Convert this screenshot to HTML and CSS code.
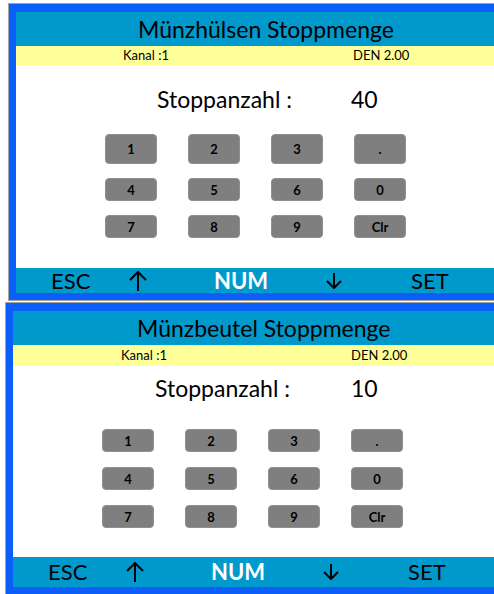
FILE: index.html
```html
<!DOCTYPE html>
<html lang="de">
<head>
  <meta charset="UTF-8">
  <title>Stoppmenge</title>
  <link rel="stylesheet" href="styles.css">
</head>
<body>
  <!-- Münzhülsen -->
  <div class="frame frame-a">
    <div class="screen screen-a">
      <div class="title">Münzhülsen Stoppmenge</div>
      <div class="info">
        <span>Kanal :1</span>
        <span>DEN 2.00</span>
      </div>
      <div class="body">
        <div class="value-row">
          <span>Stoppanzahl :</span>
          <span>40</span>
        </div>
        <div class="keypad">
          <div class="key">1</div>
          <div class="key">2</div>
          <div class="key">3</div>
          <div class="key">.</div>
          <div class="key">4</div>
          <div class="key">5</div>
          <div class="key">6</div>
          <div class="key">0</div>
          <div class="key">7</div>
          <div class="key">8</div>
          <div class="key">9</div>
          <div class="key">Clr</div>
        </div>
      </div>
      <div class="softkeys">
        <span>ESC</span>
        <span class="arrow">
          <svg width="20" height="20" viewBox="0 0 20 20"><path d="M10 1V20M2 9L10 1L18 9" fill="none" stroke="#000" stroke-width="2"/></svg>
        </span>
        <span class="num">NUM</span>
        <span class="arrow">
          <svg width="18" height="16" viewBox="0 0 18 16"><path d="M9 0V15M2 8L9 15L16 8" fill="none" stroke="#000" stroke-width="2"/></svg>
        </span>
        <span>SET</span>
      </div>
    </div>
  </div>

  <!-- Münzbeutel -->
  <div class="frame frame-b">
    <div class="screen screen-b">
      <div class="title">Münzbeutel Stoppmenge</div>
      <div class="info">
        <span>Kanal :1</span>
        <span>DEN 2.00</span>
      </div>
      <div class="body">
        <div class="value-row">
          <span>Stoppanzahl :</span>
          <span>10</span>
        </div>
        <div class="keypad">
          <div class="key">1</div>
          <div class="key">2</div>
          <div class="key">3</div>
          <div class="key">.</div>
          <div class="key">4</div>
          <div class="key">5</div>
          <div class="key">6</div>
          <div class="key">0</div>
          <div class="key">7</div>
          <div class="key">8</div>
          <div class="key">9</div>
          <div class="key">Clr</div>
        </div>
      </div>
      <div class="softkeys">
        <span>ESC</span>
        <span class="arrow">
          <svg width="20" height="20" viewBox="0 0 20 20"><path d="M10 1V20M2 9L10 1L18 9" fill="none" stroke="#000" stroke-width="2"/></svg>
        </span>
        <span class="num">NUM</span>
        <span class="arrow">
          <svg width="18" height="16" viewBox="0 0 18 16"><path d="M9 0V15M2 8L9 15L16 8" fill="none" stroke="#000" stroke-width="2"/></svg>
        </span>
        <span>SET</span>
      </div>
    </div>
  </div>
</body>
</html>
```

FILE: styles.css
```css
html, body {
  margin: 0;
  width: 494px;
  height: 594px;
  overflow: hidden;
  background: #fff;
}
body {
  font-family: Lato, "Open Sans", sans-serif;
  color: #000;
}

/* the screens run past the right edge of the shot, so no right border */
.frame {
  border: 1px solid #a4a4a4;
  border-right: 0;
}
.frame-a {
  margin: 3px 0 0 8px;
}
.frame-b {
  margin: 1px 0 0 5px;
}

.screen {
  border: 7px solid #0b5ff8;
  border-top-width: 8px;
  border-right: 0;
  background: #fff;
}

.title {
  background: #0099cc;
  height: 34px;
  line-height: 34px;
  padding-left: 122px;
  font-size: 23px;
  white-space: nowrap;
}
.screen-b .title {
  padding-left: 124px;
}

.info {
  background: #ffff99;
  display: grid;
  grid-template-columns: 230px auto;
  padding-left: 107px;
  font-size: 13px;
  height: 19px;
  line-height: 19px;
}
.screen-b .info {
  height: 21px;
  line-height: 21px;
  padding-left: 108px;
}

.body {
  height: 203px;
}
.screen-b .body {
  height: 191px;
}

.value-row {
  display: grid;
  grid-template-columns: 194px auto;
  padding: 20px 0 0 141px;
  font-size: 23px;
  line-height: 28px;
}
.screen-b .value-row {
  padding-top: 8px;
  padding-left: 142px;
  grid-template-columns: 196px auto;
}

.keypad {
  display: grid;
  grid-template-columns: repeat(4, 52px);
  grid-template-rows: 30px 23px 23px;
  column-gap: 31px;
  row-gap: 14px;
  margin: 21px 0 0 89px;
}
.screen-b .keypad {
  grid-template-rows: 23px 23px 23px;
  row-gap: 15px;
  margin-top: 27px;
}

.key {
  background: #7f7f7f;
  border: 1px solid #8f8f8f;
  border-radius: 4px;
  display: flex;
  align-items: center;
  justify-content: center;
  font-size: 13px;
  font-weight: bold;
}

.softkeys {
  background: #0099cc;
  display: grid;
  grid-template-columns: 77px 86px 111px 86px auto;
  align-items: center;
  padding-left: 35px;
  height: 25px;
  line-height: 25px;
  font-size: 22px;
}
.screen-b .softkeys {
  height: 30px;
  line-height: 30px;
}
.softkeys .num {
  color: #fff;
  font-weight: bold;
}
.arrow {
  display: flex;
  align-items: center;
}
.arrow svg {
  display: block;
}
```
